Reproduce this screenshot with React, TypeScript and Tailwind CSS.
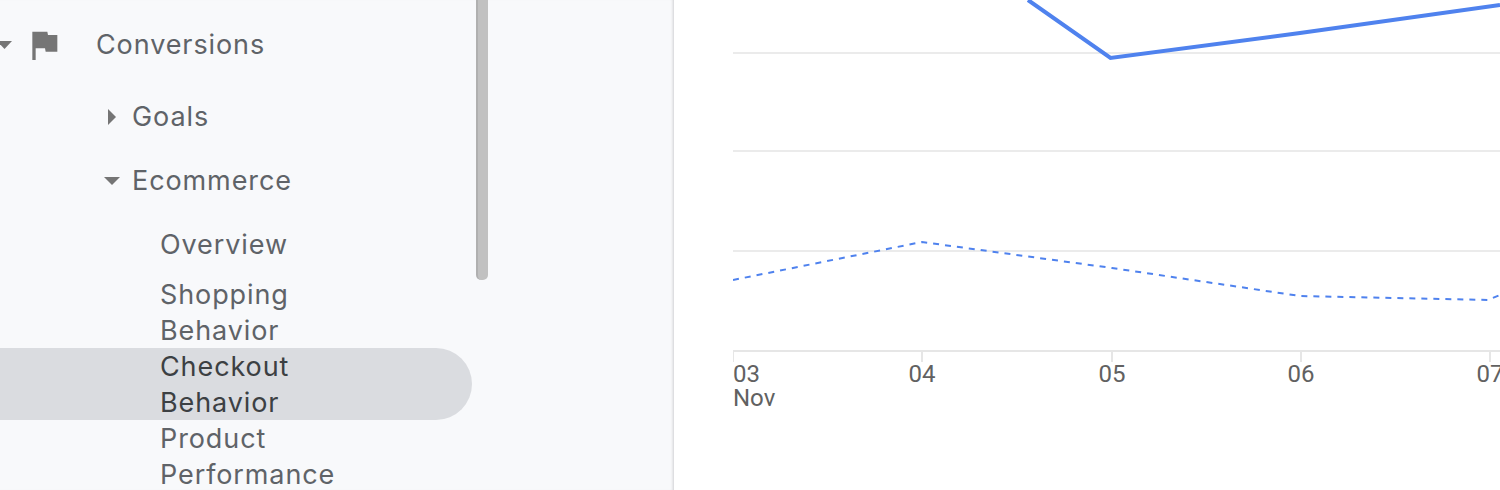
import React from "react";

const font = "font-['Inter','Liberation_Sans',sans-serif]";
const itemText = "text-[27px] tracking-[0.9px]";

function Caret({ dir, className }: { dir: "down" | "right"; className: string }) {
  return (
    <svg viewBox="0 0 16 16" className={className} fill="#757575">
      {dir === "down" ? <polygon points="0,4 16,4 8,12" /> : <polygon points="4,0 12,8 4,16" />}
    </svg>
  );
}

function NavItem({ children, active }: { children: React.ReactNode; active?: boolean }) {
  return (
    <div
      className={
        "h-[72px] rounded-r-full pl-[160px] pt-px leading-[36px] " +
        itemText +
        (active ? " bg-[#dadce0] text-[#3c4043]" : " text-[#5f6368]")
      }
    >
      {children}
    </div>
  );
}

function Sidebar() {
  return (
    <aside
      className={
        "relative h-[490px] w-[674px] shrink-0 overflow-hidden bg-[#f8f9fb] shadow-[inset_-3px_0_3px_-2px_#cfd0d2] " +
        font
      }
    >
      <div className="absolute right-[186px] top-[-20px] h-[300px] w-[12px] rounded-b-[5px] border-l-2 border-[#b0b0b0] bg-[#c1c1c1]" />
      <nav className="flex w-[472px] flex-col pt-2">
        <div className={"flex h-[72px] items-center pt-[2px] text-[#5f6368] " + itemText}>
          <svg viewBox="0 0 12 8" className="h-[8px] w-[12px] shrink-0" fill="#757575">
            <polygon points="-3,0 12,0 4.5,8" />
          </svg>
          <svg viewBox="0 0 24 24" className="ml-[12px] h-[40px] w-[40px] shrink-0" fill="#757575">
            <path d="M14.4 6L14 4H5v17h2v-7h5.6l.4 2h7V6z" />
          </svg>
          <span className="ml-[32px]">Conversions</span>
        </div>
        <div className={"mt-1 flex h-[64px] items-center pl-[104px] pt-[2px] text-[#5f6368] " + itemText}>
          <Caret dir="right" className="h-[16px] w-[16px] shrink-0" />
          <span className="ml-[12px]">Goals</span>
        </div>
        <div className={"flex h-[64px] items-center pl-[104px] pt-[2px] text-[#5f6368] " + itemText}>
          <Caret dir="down" className="h-[16px] w-[16px] shrink-0" />
          <span className="ml-[12px]">Ecommerce</span>
        </div>
        <div className={"flex h-[64px] items-center pl-[160px] pt-[2px] text-[#5f6368] " + itemText}>Overview</div>
        <NavItem>Shopping<br />Behavior</NavItem>
        <NavItem active>Checkout<br />Behavior</NavItem>
        <NavItem>Product<br />Performance</NavItem>
      </nav>
    </aside>
  );
}

const grid = [53, 151, 251];
const ticks = [0, 189, 379, 568, 757];
const labels = [
  { x: 0, t: "03" },
  { x: 189, t: "04" },
  { x: 379, t: "05" },
  { x: 568, t: "06" },
  { x: 757, t: "07" },
];

function Chart() {
  return (
    <svg width={767} height={490} viewBox="0 0 767 490" className="block shrink-0">
      {grid.map((y) => (
        <line key={y} x1={0} x2={767} y1={y} y2={y} stroke="#ebebeb" strokeWidth={2} />
      ))}
      <line x1={0} x2={767} y1={351} y2={351} stroke="#e6e6e6" strokeWidth={2} />
      {ticks.map((x) => (
        <line key={x} x1={x} x2={x} y1={351} y2={362} stroke="#e6e6e6" strokeWidth={2} />
      ))}
      <polyline points="295,0 377.5,58 567,33 767,5" fill="none" stroke="#4f82ee" strokeWidth={4} />
      <polyline
        points="0,280 189,242 379,268 567,296 755,300 767,295"
        fill="none"
        stroke="#4f82ee"
        strokeWidth={2}
        strokeDasharray="6 6"
      />
      <g fontFamily="Roboto, sans-serif" fontSize={24} fill="#616161">
        {labels.map((l, i) => (
          <text key={l.t} x={l.x} y={382} textAnchor={i === 0 ? "start" : "middle"}>
            {l.t}
          </text>
        ))}
        <text x={0} y={406}>Nov</text>
      </g>
    </svg>
  );
}

export default function App() {
  return (
    <div className="flex h-[490px] w-[1500px] overflow-hidden bg-white">
      <Sidebar />
      <main className="flex-1 pl-[59px]">
        <Chart />
      </main>
    </div>
  );
}
